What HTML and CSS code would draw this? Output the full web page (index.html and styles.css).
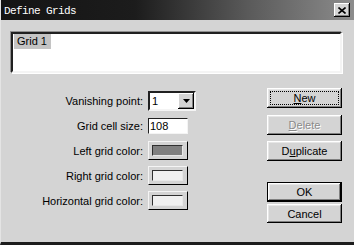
FILE: index.html
```html
<!DOCTYPE html>
<html>
<head>
<meta charset="utf-8">
<link rel="stylesheet" href="styles.css">
</head>
<body>
<div class="window">
  <div class="titlebar">
    <span class="title">Define Grids</span>
    <span class="close"><svg width="8" height="7" viewBox="0 0 8 7"><path d="M0.5 0.5 L7.5 6.5 M7.5 0.5 L0.5 6.5" stroke="#000" stroke-width="1.6" fill="none"/></svg></span>
  </div>
  <div class="content">
    <div class="listbox"><span class="item">Grid 1</span></div>
    <div class="main">
      <div class="form">
        <label class="lbl">Vanishing point:</label>
        <div class="combo"><span class="combo-val">1</span><span class="combo-btn"><svg width="7" height="4" viewBox="0 0 7 4"><path d="M0 0 H7 L3.5 4 Z" fill="#000"/></svg></span></div>
        <label class="lbl">Grid cell size:</label>
        <div class="field">108</div>
        <label class="lbl">Left grid color:</label>
        <div class="swatch"><span class="swatch-in dark"></span></div>
        <label class="lbl">Right grid color:</label>
        <div class="swatch"><span class="swatch-in"></span></div>
        <label class="lbl">Horizontal grid color:</label>
        <div class="swatch"><span class="swatch-in"></span></div>
      </div>
      <div class="buttons">
        <div class="btn focus"><u>N</u>ew</div>
        <div class="btn disabled gap7"><u>D</u>elete</div>
        <div class="btn gap6">D<u>u</u>plicate</div>
        <div class="btn default gap21">OK</div>
        <div class="btn short gap2">Cancel</div>
      </div>
    </div>
  </div>
</div>
</body>
</html>
```
FILE: styles.css
```css
html, body {
  margin: 0;
  padding: 0;
  background: #d4d4d4;
}
.window {
  width: 354px;
  height: 245px;
  box-sizing: border-box;
  background: #d4d4d4;
  border-bottom: 3px solid #1c1c1c;
  border-left: 1px solid #e4e4e4;
  display: flex;
  flex-direction: column;
  font-family: "Liberation Sans", Arial, sans-serif;
  font-size: 11px;
  color: #000;
}
.titlebar {
  height: 20px;
  flex: none;
  display: flex;
  align-items: center;
  justify-content: space-between;
  padding: 0 4px 0 3px;
  background: linear-gradient(to right, #141414 0%, #1c1c1c 38%, #5a5a5a 70%, #8c8c8c 100%);
}
.title {
  font-family: "Liberation Mono", "DejaVu Sans Mono", monospace;
  font-size: 11px;
  letter-spacing: -0.6px;
  color: #fff;
  padding-top: 1px;
}
.close {
  width: 16px;
  height: 14px;
  box-sizing: border-box;
  background: #d4d4d4;
  box-shadow: inset -1px -1px #000, inset 1px 1px #fff, inset -2px -2px #808080;
  display: flex;
  align-items: center;
  justify-content: center;
}
.content {
  padding: 12px 12px 0 10px;
}
.listbox {
  height: 41px;
  box-sizing: border-box;
  background: #fff;
  border: 2px solid;
  border-color: #202020 #f4f4f4 #f4f4f4 #202020;
  box-shadow: 1px 1px 0 #fff, -1px -1px 0 #909090;
  padding: 0 0 0 1px;
}
.item {
  display: inline-block;
  background: #c4c4c4;
  padding: 1px 4px 2px 3px;
  line-height: 12px;
}
.main {
  display: flex;
  margin-top: 15px;
}
.form {
  display: grid;
  grid-template-columns: 131px auto;
  grid-auto-rows: 25px;
  column-gap: 5px;
  align-items: center;
  justify-items: start;
  margin-left: 1px;
}
.lbl {
  justify-self: end;
  white-space: nowrap;
}
.combo {
  width: 48px;
  height: 20px;
  box-sizing: border-box;
  background: #fff;
  border: 2px solid;
  border-color: #202020 #f4f4f4 #f4f4f4 #202020;
  display: flex;
  align-items: center;
  justify-content: space-between;
}
.combo-val {
  padding-left: 2px;
}
.combo-btn {
  width: 16px;
  height: 16px;
  box-sizing: border-box;
  background: #d4d4d4;
  box-shadow: inset -1px -1px #000, inset 1px 1px #fff, inset -2px -2px #808080;
  display: flex;
  align-items: center;
  justify-content: center;
}
.field {
  width: 40px;
  height: 16px;
  box-sizing: border-box;
  background: #fff;
  border: 1px solid;
  border-color: #202020 #f4f4f4 #f4f4f4 #202020;
  padding-left: 1px;
  line-height: 14px;
}
.swatch {
  width: 40px;
  height: 19px;
  box-sizing: border-box;
  border: 1px solid;
  border-color: #f4f4f4 #000 #000 #f4f4f4;
  padding: 3px 4px 3px 3px;
  display: flex;
}
.swatch-in {
  flex: 1;
  box-sizing: border-box;
  border: 1px solid;
  border-color: #303030 #e8e8e8 #e8e8e8 #303030;
  background: #f0f0f0;
}
.swatch-in.dark {
  background: #808080;
}
.buttons {
  margin-left: auto;
  width: 75px;
  display: flex;
  flex-direction: column;
}
.btn {
  height: 20px;
  box-sizing: border-box;
  background: #d4d4d4;
  box-shadow: inset -1px -1px #000, inset 1px 1px #fff, inset -2px -2px #808080, inset 2px 2px #e6e6e6;
  display: flex;
  align-items: center;
  justify-content: center;
  line-height: 12px;
}
.btn.focus {
  outline: 1px dotted #000;
  outline-offset: -4px;
}
.btn.disabled {
  color: #8a8a8a;
  text-shadow: 1px 1px 0 #fff;
}
.btn.default {
  border: 1px solid #000;
}
.btn.short {
  height: 19px;
}
.gap7 { margin-top: 7px; }
.gap6 { margin-top: 6px; }
.gap21 { margin-top: 21px; }
.gap2 { margin-top: 2px; }
```
